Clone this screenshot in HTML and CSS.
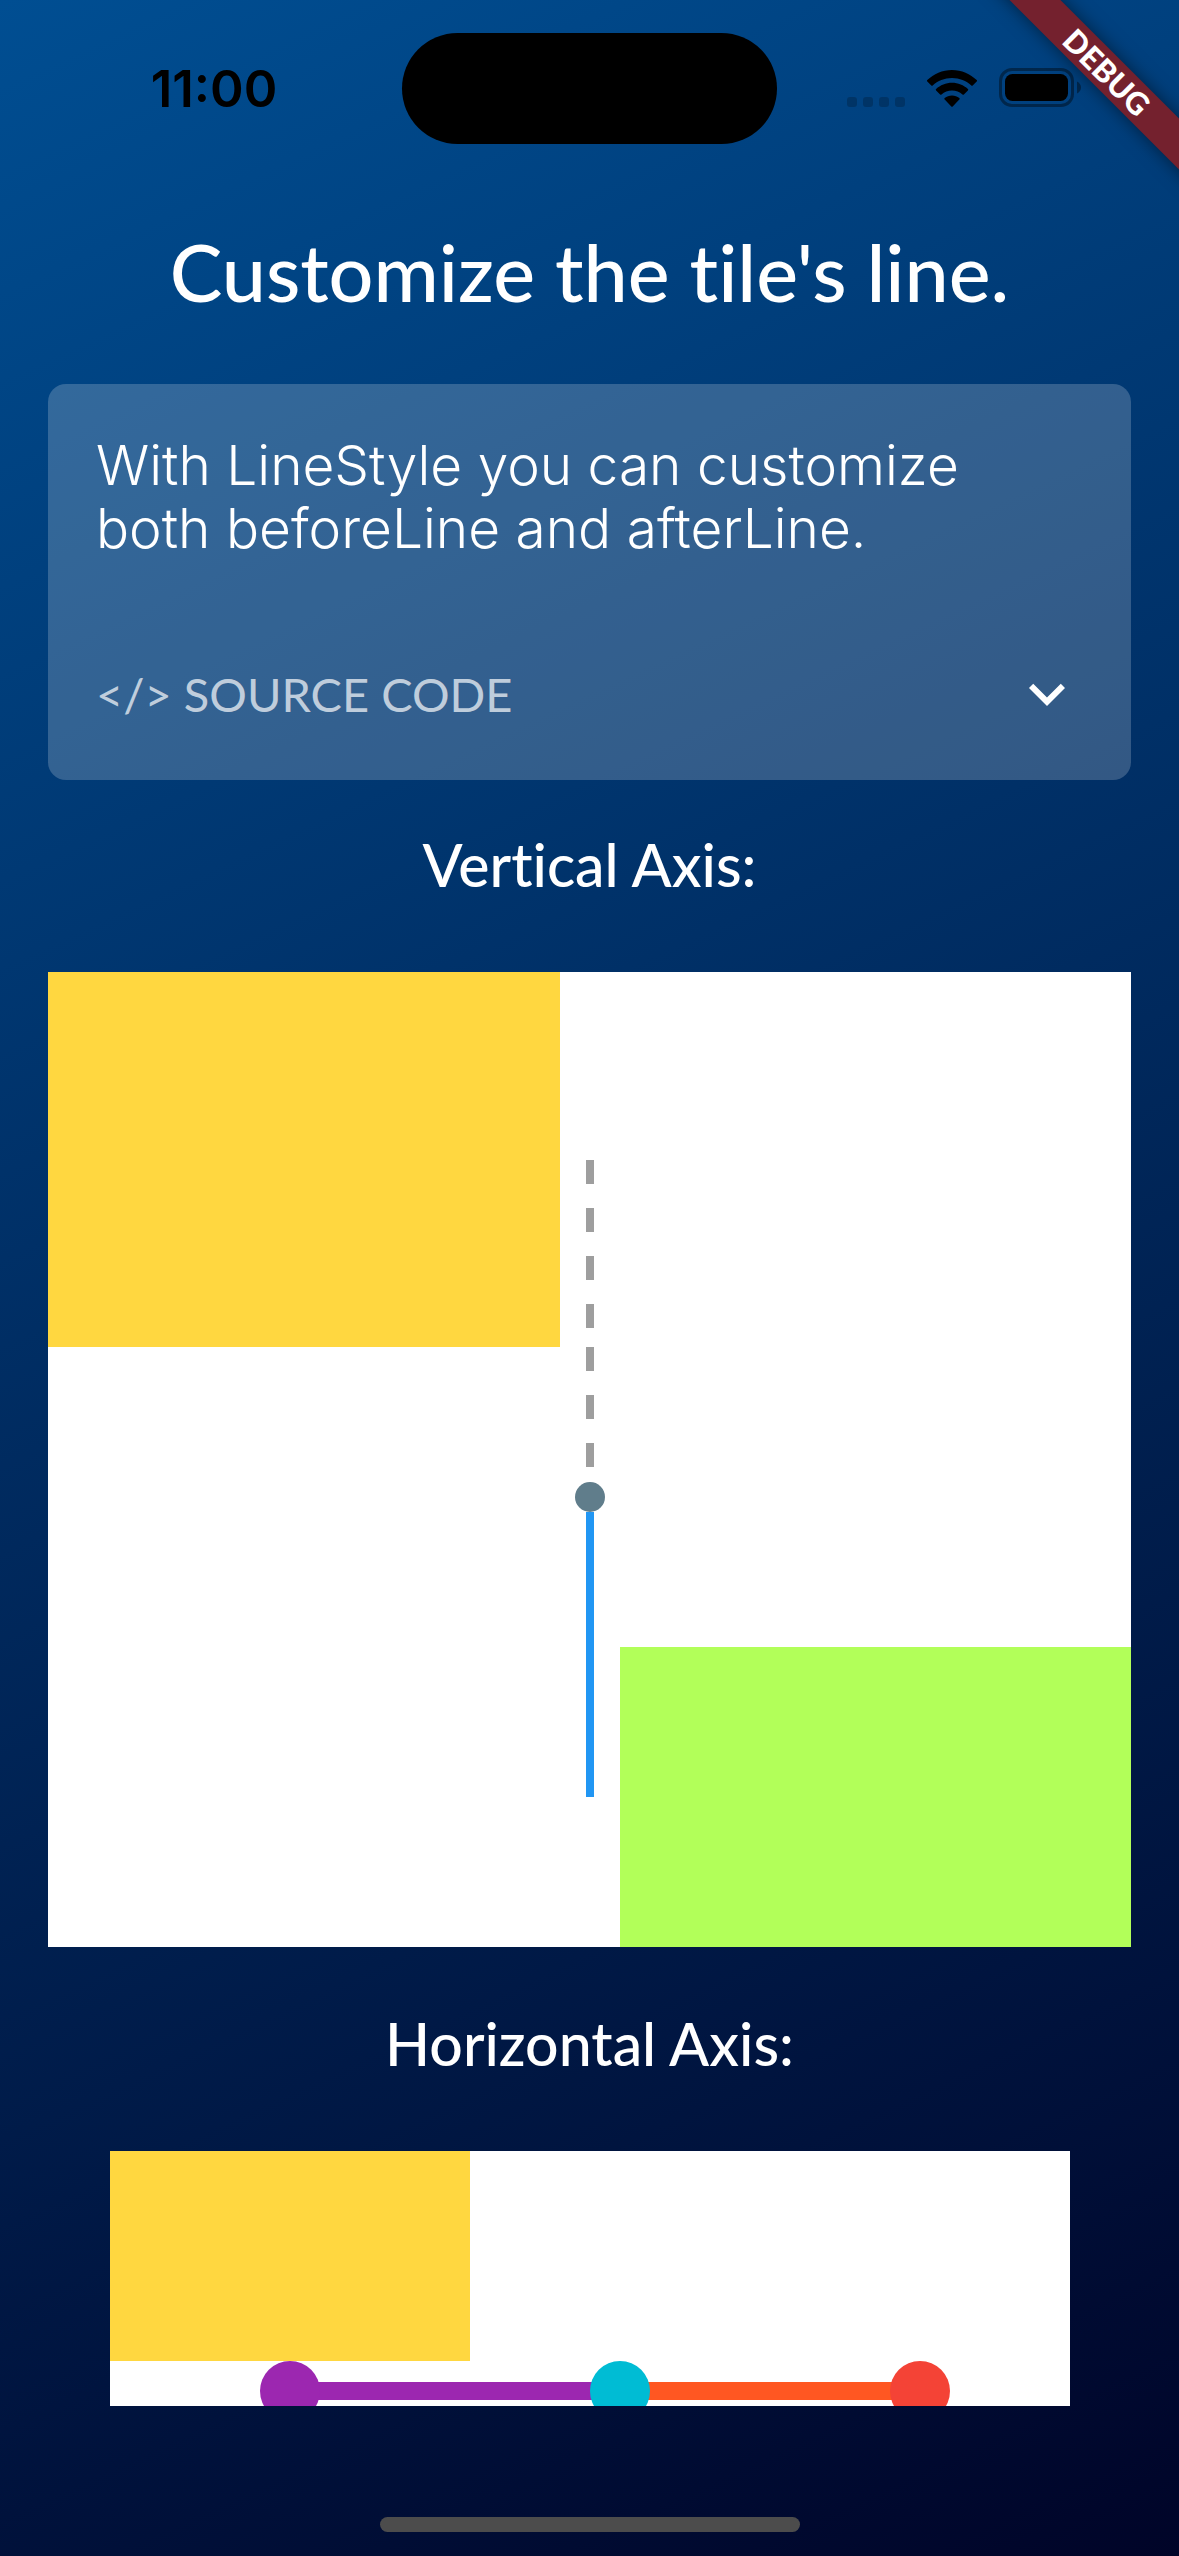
FILE: index.html
```html
<!DOCTYPE html>
<html lang="en">
<head>
<meta charset="utf-8">
<meta name="viewport" content="width=device-width, initial-scale=1">
<title>Timeline tile: line style</title>
<link rel="stylesheet" href="styles.css">
</head>
<body>
<div class="app">
  <header class="status">
    <time class="clock">11:00</time>
    <div class="island"></div>
    <div class="indicators">
      <svg class="signal" viewBox="0 0 58 10" aria-hidden="true">
        <rect x="0" width="10" height="10" rx="3"/><rect x="16" width="10" height="10" rx="3"/><rect x="32" width="10" height="10" rx="3"/><rect x="48" width="10" height="10" rx="3"/>
      </svg>
      <svg class="wifi" viewBox="0 0 50 37" aria-hidden="true">
        <path d="M25 0C15.400 0 6.600 3.900 .300 10.100a1 1 0 0 0 0 1.400l4 4a1 1 0 0 0 1.400 0C10.700 10.800 17.500 8 25 8s14.300 2.800 19.300 7.500a1 1 0 0 0 1.400 0l4-4a1 1 0 0 0 0-1.400C43.400 3.900 34.600 0 25 0Z"/>
        <path d="M25 12.800c-6.100 0-11.700 2.400-15.900 6.200a1 1 0 0 0 0 1.500l4 4a1 1 0 0 0 1.400 0c2.800-2.500 6.500-4 10.500-4s7.700 1.500 10.500 4a1 1 0 0 0 1.400 0l4-4a1 1 0 0 0 0-1.500c-4.200-3.800-9.800-6.200-15.900-6.200Z"/>
        <path d="M25 25.400c-2.800 0-5.300 1-7.300 2.700a1 1 0 0 0 0 1.500l6.600 6.900a1 1 0 0 0 1.400 0l6.600-6.900a1 1 0 0 0 0-1.500c-2-1.700-4.500-2.700-7.300-2.700Z"/>
      </svg>
      <svg class="battery" viewBox="0 0 82 39" aria-hidden="true">
        <rect class="faint-line" x="1.500" y="1.500" width="72" height="36" rx="11.500"/>
        <rect x="6" y="6" width="63" height="27" rx="7.500"/>
        <path class="faint" d="M78 13.500c2.400 1 4 3.400 4 6s-1.600 5-4 6Z"/>
      </svg>
    </div>
  </header>

  <main class="content">
    <h1 class="title">Customize the tile's line.</h1>

    <section class="card">
      <p class="message">With LineStyle you can customize<br>both beforeLine and afterLine.</p>
      <button class="expander" type="button" aria-expanded="false">
        <span>&lt;/&gt; SOURCE CODE</span>
        <svg class="chevron" viewBox="0 0 24 24" aria-hidden="true"><path d="M16.590 8.590 12 13.170 7.410 8.590 6 10l6 6 6-6z"/></svg>
      </button>
    </section>

    <h2 class="subtitle">Vertical Axis:</h2>
    <div class="vertical">
      <div class="row first">
        <div class="fill yellow"></div>
        <div class="axis"><span class="dashes"></span></div>
      </div>
      <div class="row second">
        <div></div>
        <div class="axis">
          <span class="dashes"></span>
          <span class="dot"></span>
          <span class="solid"></span>
        </div>
        <div class="fill green"></div>
      </div>
    </div>

    <h2 class="subtitle">Horizontal Axis:</h2>
    <div class="horizontal">
      <div class="fill yellow start"></div>
      <div class="track">
        <span class="node purple"></span>
        <span class="bar purple"></span>
        <span class="node cyan"></span>
        <span class="bar orange"></span>
        <span class="node red"></span>
      </div>
    </div>
  </main>

  <footer class="home"><div class="home-bar"></div></footer>

  <div class="corner"><div class="banner">DEBUG</div></div>
</div>
</body>
</html>
```

FILE: styles.css
```css
* {
  box-sizing: border-box;
}

body {
  margin: 0;
  font-family: Lato, sans-serif;
  color: #fff;
}

.app {
  position: relative;
  display: flex;
  flex-direction: column;
  height: 100vh;
  overflow: hidden;
  background: linear-gradient(155deg, #004e92, #000428);
}

/* Status bar */
.status {
  display: grid;
  grid-template-columns: 1fr auto 1fr;
  align-items: center;
  flex: none;
  height: 177px;
}

.clock {
  justify-self: center;
  padding-left: 26px;
  font: 600 51px/60px Inter, sans-serif;
  color: #000;
}

.island {
  width: 375px;
  height: 111px;
  border-radius: 56px;
  background: #000;
}

.indicators {
  display: flex;
  align-items: flex-end;
  justify-content: flex-end;
  gap: 22px;
  padding: 0 98px 2px 0;
}

.signal {
  width: 58px;
  height: 10px;
  opacity: .2;
}

.wifi {
  width: 50px;
  height: 37px;
}

.battery {
  width: 82px;
  height: 39px;
}

.faint {
  opacity: .4;
}

.faint-line {
  fill: none;
  stroke: #000;
  stroke-width: 3;
  opacity: .4;
}

.content {
  flex: 1;
  min-height: 0;
  overflow: hidden;
  padding: 0 48px;
}

.title,
.subtitle {
  margin: 0;
  font-weight: 500;
  font-variant-ligatures: none;
  text-align: center;
}

.title {
  padding: 51px 0 68px;
  font-size: 79px;
  line-height: 88px;
}

.subtitle {
  padding: 53px 0 75px;
  font-size: 59px;
  line-height: 64px;
}

.card {
  display: flex;
  flex-direction: column;
  gap: 98px;
  padding: 50px 48px;
  border-radius: 18px;
  background: rgba(255, 255, 255, .2);
}

.message {
  margin: 0;
  font: 300 55px/63px Inter, sans-serif;
}

.expander {
  display: flex;
  align-items: center;
  justify-content: space-between;
  height: 72px;
  padding: 0;
  border: 0;
  background: none;
  font: 400 47px/58px Lato, sans-serif;
  color: rgba(255, 255, 255, .7);
}

.chevron {
  width: 72px;
  height: 72px;
  fill: #fff;
}

/* Vertical timeline */
.vertical,
.horizontal {
  background: #fff;
}

.vertical {
  margin-bottom: 12px;
}

.row {
  display: grid;
  grid-template-columns: 1fr 60px 1fr;
}

.first {
  height: 375px;
}

.second {
  height: 600px;
}

.axis {
  display: flex;
  flex-direction: column;
  align-items: center;
}

.first .axis {
  justify-content: flex-end;
}

.dashes {
  width: 8px;
  height: 135px;
  background: repeating-linear-gradient(#9e9e9e 0 24px, transparent 24px 48px);
}

.first .dashes {
  height: 50%;
}

.dot {
  width: 30px;
  height: 30px;
  border-radius: 50%;
  background: #607d8b;
}

.solid {
  width: 8px;
  height: 285px;
  background: #2196f3;
}

.green {
  align-self: end;
  height: 300px;
  background: #b2ff59;
}

.yellow {
  background: #ffd740;
}

/* Horizontal timeline */
.horizontal {
  max-width: 960px;
  height: 480px;
  margin: 0 auto;
}

.start {
  width: 360px;
  height: 210px;
}

.track {
  display: flex;
  align-items: center;
  padding: 0 120px 0 150px;
}

.node {
  flex: none;
  z-index: 1;
  width: 60px;
  height: 60px;
  border-radius: 50%;
}

.bar {
  flex: 270 1 0;
  height: 18px;
  margin: 0 -4px;
}

.bar.orange {
  flex-grow: 240;
}

.purple {
  background: #9c27b0;
}

.cyan {
  background: #00bcd4;
}

.orange {
  background: #ff5722;
}

.red {
  background: #f44336;
}

/* Home indicator */
.home {
  display: flex;
  align-items: flex-end;
  justify-content: center;
  flex: none;
  height: 150px;
  padding-bottom: 24px;
}

.home-bar {
  width: 420px;
  height: 15px;
  border-radius: 8px;
  background: #4c4c4c;
}

/* Debug ribbon over the top right corner */
.corner {
  position: absolute;
  top: 0;
  right: 0;
  display: grid;
  grid-template-columns: 300px;
  place-content: center;
  width: 144px;
  height: 144px;
}

.banner {
  background: #74212e;
  box-shadow: 0 0 18px rgba(0, 0, 0, .5);
  font-family: "Lato Black", Lato, sans-serif;
  font-size: 31px;
  font-weight: 900;
  line-height: 36px;
  text-align: center;
  transform: rotate(45deg);
}
```
